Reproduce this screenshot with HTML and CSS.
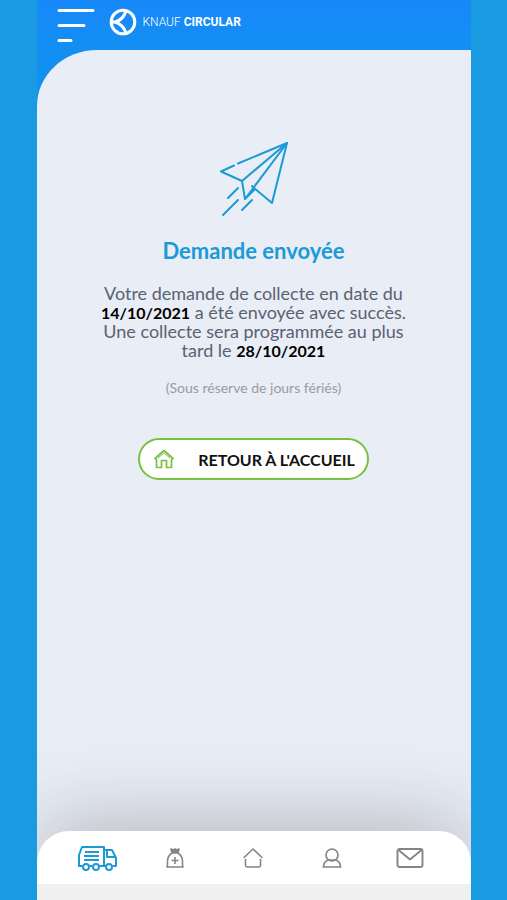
FILE: index.html
```html
<!DOCTYPE html>
<html lang="fr">
<head>
<meta charset="utf-8">
<meta name="viewport" content="width=device-width, initial-scale=1">
<title>Knauf Circular</title>
<link rel="stylesheet" href="styles.css">
</head>
<body>
<div class="app">
  <header class="topbar">
    <button class="menu" type="button" aria-label="Menu">
      <svg width="38" height="36" viewBox="0 0 38 36" fill="none" stroke="currentColor" stroke-width="3" stroke-linecap="round"><path d="M2 3.500H36M2 18.500H27M2 33.500H14"/></svg>
    </button>
    <a class="brand" href="#">
      <svg width="28" height="28" viewBox="0 0 28 28" fill="none" stroke="currentColor"><circle cx="14" cy="14" r="11.800" stroke-width="3"/><path d="M2 14H7" stroke-width="3"/><path d="M17 3C15.500 8 12 12 6 14C12 16 15.500 20 17 25" stroke-width="3"/><path d="M8 14C12 12.500 15 9 16 4" stroke-width="2"/></svg>
      <span class="brand-name">KNAUF <b>CIRCULAR</b></span>
    </a>
  </header>
  <main class="content">
    <svg class="plane" width="70" height="76" viewBox="0 0 70 76" fill="none" stroke="currentColor" stroke-width="2" stroke-linecap="round" stroke-linejoin="round"><path d="M19 22.500L68 2L53 62L35 47"/><path d="M15 24.500L2 30.500L23 40L68 2"/><path d="M23 40L26 58L68 2M26 58L35 49M33 45L35 47"/><path d="M19 47L9 57M19 59L4 74M33 59L23 69"/></svg>
    <h1>Demande envoyée</h1>
    <p class="message">Votre demande de collecte en date du<br><b>14/10/2021</b> a été envoyée avec succès.<br>Une collecte sera programmée au plus<br>tard le <b>28/10/2021</b></p>
    <p class="note">(Sous réserve de jours fériés)</p>
    <a class="back" href="#">
      <svg width="20" height="20" viewBox="0 0 20 20" fill="none" stroke="currentColor" stroke-width="1.700" stroke-linejoin="round"><path d="M1 9.500L10 1.500L19 9.500L17.500 10.500V18.500H12.500V11.500H7.500V18.500H2.500V10.500Z"/><path d="M4 9L10 4L16 9" stroke-width="1"/></svg>
      <span>RETOUR À L'ACCUEIL</span>
    </a>
  </main>
  <nav class="tabs" aria-label="Navigation">
    <a class="tab active" href="#" aria-label="Collectes">
      <svg width="40" height="26" viewBox="0 0 40 26" fill="none" stroke="currentColor" stroke-width="2" stroke-linejoin="round"><path d="M5 21H2V10L5 2H27V21H24M11 21H15M21 21H29M27 5H35L39 13V21H36"/><path d="M30 6V12H38"/><path d="M8 7H22M7 11H22M7 15H22"/><circle cx="9" cy="22" r="3"/><circle cx="19" cy="22" r="3"/><circle cx="32" cy="22" r="3"/></svg>
    </a>
    <a class="tab" href="#" aria-label="Sacs">
      <svg width="18" height="20" viewBox="0 0 18 20" fill="none" stroke="currentColor" stroke-width="1.600" stroke-linejoin="round"><path d="M6 5L5 1L7.500 2L9 1L10.500 2L13 1L12 5Z" fill="currentColor"/><path d="M6 5C3 7 1.500 9.500 1.500 13V17L1 19H17L16.500 17V13C16.500 9.500 15 7 12 5"/><path d="M9 9V16M5.500 12.500H12.500"/></svg>
    </a>
    <a class="tab" href="#" aria-label="Accueil">
      <svg width="20" height="20" viewBox="0 0 20 20" fill="none" stroke="currentColor" stroke-width="1.600" stroke-linecap="round" stroke-linejoin="round"><path d="M1 9.500L10 1L19 9.500"/><path d="M2.500 11.500V17Q2.500 19 4.500 19H15.500Q17.500 19 17.500 17V11.500"/></svg>
    </a>
    <a class="tab" href="#" aria-label="Profil">
      <svg width="20" height="20" viewBox="0 0 20 20" fill="none" stroke="currentColor" stroke-width="1.700" stroke-linejoin="round"><circle cx="10" cy="7" r="6"/><path d="M6.500 12C3 13 1.500 15 1.500 19H18.500C18.500 15 17 13 13.500 12Z"/></svg>
    </a>
    <a class="tab" href="#" aria-label="Messages">
      <svg width="28" height="20" viewBox="0 0 28 20" fill="none" stroke="currentColor" stroke-width="1.900" stroke-linejoin="round"><rect x="1.500" y="1" width="25" height="18" rx="2"/><path d="M2.500 2L14 11.500L25.500 2"/></svg>
    </a>
  </nav>
  <div class="footer-strip"></div>
</div>
</body>
</html>
```
FILE: styles.css
```css
* {
  box-sizing: border-box;
}

body {
  margin: 0;
  padding: 0 7.2%;
  background: #1a9ae0;
  font-family: "Century Gothic", Lato, sans-serif;
  color: #596273;
}

.app {
  display: flex;
  flex-direction: column;
  min-height: 100vh;
  overflow: hidden;
  background: linear-gradient(#1789fa, #0f93ec 100px);
}

.topbar {
  display: flex;
  align-items: flex-start;
  gap: 14px;
  height: 50px;
  padding: 7px 20px 0;
  color: #fff;
}

.menu {
  display: block;
  padding: 0;
  border: 0;
  background: none;
  color: inherit;
}

svg {
  display: block;
  flex: none;
}

.brand {
  display: flex;
  align-items: center;
  gap: 6px;
  padding-top: 1px;
  color: inherit;
  font-size: 12px;
  text-decoration: none;
  white-space: nowrap;
}

.brand-name {
  font-family: Roboto, sans-serif;
  font-weight: 300;
}

.brand-name b {
  font-weight: 700;
}

/* Runs on behind the tab bar so its rounded corners show the page colour. */
.content {
  display: flex;
  flex: 1;
  flex-direction: column;
  align-items: center;
  margin-bottom: -40px;
  padding: 91px 16px 40px;
  border-top-left-radius: 60px 56px;
  background: #e9edf5;
  text-align: center;
}

.plane {
  color: #1b9ad6;
}

h1 {
  margin: 20px 0 0;
  color: #1b9ad6;
  font-size: 22px;
  line-height: 28px;
}

.message {
  margin: 19px 0 0;
  font-size: 18px;
  line-height: 19px;
}

.message b {
  color: #000;
  font-size: 16px;
}

.note {
  margin: 20px 0 0;
  color: #989ca4;
  font-size: 14px;
  line-height: 16px;
}

.back {
  display: flex;
  align-items: center;
  gap: 24px;
  height: 42px;
  margin-top: 42px;
  padding: 0 12px 0 14px;
  border: 2px solid #78c043;
  border-radius: 21px;
  background: #fff;
  color: #111;
  font-size: 16px;
  font-weight: 700;
  text-decoration: none;
  white-space: nowrap;
}

.back svg {
  color: #78c043;
}

.tabs {
  display: grid;
  grid-template-columns: repeat(5, 1fr);
  align-items: center;
  height: 53px;
  padding: 0 21px;
  border-radius: 32px 32px 0 0;
  background: #fff;
  box-shadow: 0 0 80px rgba(70, 72, 78, 0.45);
}

.tab {
  display: flex;
  justify-content: center;
  color: #858585;
}

.tab.active {
  color: #1b9ad6;
}

.footer-strip {
  position: relative;
  height: 16px;
  background: #f0f0f0;
}
```
